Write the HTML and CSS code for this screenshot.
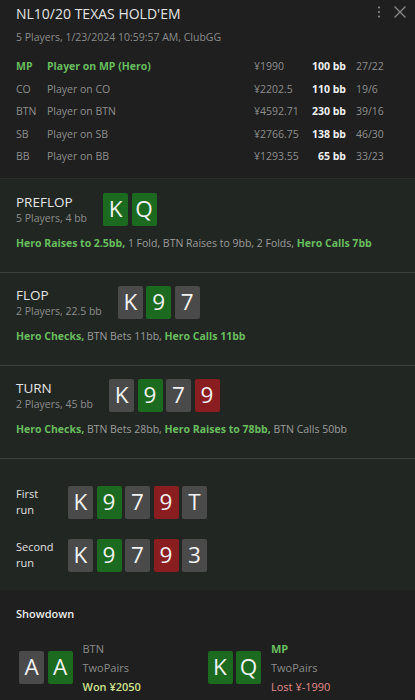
FILE: index.html
```html
<!DOCTYPE html>
<html>
<head>
<meta charset="utf-8">
<link rel="stylesheet" href="styles.css">
</head>
<body>
<div class="app">
  <header class="top">
    <div class="title-row">
      <h1 class="title">NL10/20 TEXAS HOLD'EM</h1>
      <div class="icons">
        <svg class="ico" width="10" height="14" viewBox="0 0 10 14"><circle cx="5" cy="2.5" r="1.1"/><circle cx="5" cy="7" r="1.1"/><circle cx="5" cy="11.5" r="1.1"/></svg>
        <svg class="ico x" width="14" height="14" viewBox="0 0 14 14"><path d="M1.5 1.5 L12.5 12.5 M12.5 1.5 L1.5 12.5"/></svg>
      </div>
    </div>
    <div class="sub">5 Players, 1/23/2024 10:59:57 AM, ClubGG</div>
    <div class="players">
      <div class="prow hero"><span>MP</span><span>Player on MP (Hero)</span><span class="money">¥1990</span><span class="bb">100 bb</span><span class="ratio">27/22</span></div>
      <div class="prow"><span>CO</span><span>Player on CO</span><span class="money">¥2202.5</span><span class="bb">110 bb</span><span class="ratio">19/6</span></div>
      <div class="prow"><span>BTN</span><span>Player on BTN</span><span class="money">¥4592.71</span><span class="bb">230 bb</span><span class="ratio">39/16</span></div>
      <div class="prow"><span>SB</span><span>Player on SB</span><span class="money">¥2766.75</span><span class="bb">138 bb</span><span class="ratio">46/30</span></div>
      <div class="prow"><span>BB</span><span>Player on BB</span><span class="money">¥1293.55</span><span class="bb">65 bb</span><span class="ratio">33/23</span></div>
    </div>
  </header>

  <section class="street first">
    <div class="street-head">
      <div class="sh-text">
        <div class="st-name">PREFLOP</div>
        <div class="st-sub">5 Players, 4 bb</div>
      </div>
      <div class="cards"><span class="card g">K</span><span class="card g">Q</span></div>
    </div>
    <div class="actions"><span class="hl">Hero Raises to 2.5bb,</span> 1 Fold, BTN Raises to 9bb, 2 Folds, <span class="hl">Hero Calls 7bb</span></div>
  </section>

  <section class="street">
    <div class="street-head">
      <div class="sh-text">
        <div class="st-name">FLOP</div>
        <div class="st-sub">2 Players, 22.5 bb</div>
      </div>
      <div class="cards"><span class="card k">K</span><span class="card g">9</span><span class="card k">7</span></div>
    </div>
    <div class="actions"><span class="hl">Hero Checks,</span> BTN Bets 11bb, <span class="hl">Hero Calls 11bb</span></div>
  </section>

  <section class="street">
    <div class="street-head">
      <div class="sh-text">
        <div class="st-name">TURN</div>
        <div class="st-sub">2 Players, 45 bb</div>
      </div>
      <div class="cards"><span class="card k">K</span><span class="card g">9</span><span class="card k">7</span><span class="card r">9</span></div>
    </div>
    <div class="actions"><span class="hl">Hero Checks,</span> BTN Bets 28bb, <span class="hl">Hero Raises to 78bb,</span> BTN Calls 50bb</div>
  </section>

  <section class="runs">
    <div class="run">
      <div class="run-label">First<br>run</div>
      <div class="cards"><span class="card k">K</span><span class="card g">9</span><span class="card k">7</span><span class="card r">9</span><span class="card k">T</span></div>
    </div>
    <div class="run">
      <div class="run-label">Second<br>run</div>
      <div class="cards"><span class="card k">K</span><span class="card g">9</span><span class="card k">7</span><span class="card r">9</span><span class="card k">3</span></div>
    </div>
  </section>

  <section class="showdown">
    <div class="sd-title">Showdown</div>
    <div class="hands">
      <div class="hand">
        <div class="cards"><span class="card k">A</span><span class="card g">A</span></div>
        <div class="hand-info">
          <div class="hp">BTN</div>
          <div class="hr">TwoPairs</div>
          <div class="won">Won ¥2050</div>
        </div>
      </div>
      <div class="hand">
        <div class="cards"><span class="card g">K</span><span class="card g">Q</span></div>
        <div class="hand-info">
          <div class="hp hero-pos">MP</div>
          <div class="hr">TwoPairs</div>
          <div class="lost">Lost ¥-1990</div>
        </div>
      </div>
    </div>
  </section>
</div>
</body>
</html>
```

FILE: styles.css
```css
* { box-sizing: border-box; }
html, body { margin: 0; padding: 0; }
body {
  background: #1e1f1e;
  font-family: "Open Sans", "Noto Sans", sans-serif;
  color: #a0a0a0;
  width: 415px;
  height: 700px;
  overflow: hidden;
}
.app { width: 415px; }

.top {
  background: #1e1f1e;
  padding: 4px 16px 10px;
  border-bottom: 1px solid #2b2f2c;
}
.title-row {
  display: flex;
  justify-content: space-between;
  align-items: center;
  height: 20px;
}
.title {
  margin: 0;
  font-size: 14px;
  font-weight: 400;
  line-height: 20px;
  color: #e4e4e4;
}
.icons {
  display: flex;
  align-items: center;
  gap: 9px;
  margin-right: -8px;
  margin-top: -4px;
}
.ico { fill: #8a8a8a; }
.ico.x { fill: none; stroke: #8a8a8a; stroke-width: 1.3; }
.sub {
  margin-top: 5px;
  font-size: 10.5px;
  line-height: 16px;
  color: #8c8c8c;
}
.players { margin-top: 10px; }
.prow {
  display: grid;
  grid-template-columns: 31px 1fr 50px 42px 53px;
  height: 22.5px;
  align-items: center;
  font-size: 10.5px;
  color: #8e8e8e;
}
.prow .bb { text-align: right; font-weight: 700; color: #f0f0f0; }
.prow .ratio { padding-left: 10px; }
.prow.hero span:nth-child(1), .prow.hero span:nth-child(2) { color: #68bd5e; font-weight: 700; }

.street {
  background: #222623;
  padding: 13px 16px 0;
  height: 93px;
  border-bottom: 1px solid #3a3f3b;
}
.street.first { padding-top: 14px; height: 94px; }
.street-head {
  display: flex;
  align-items: flex-end;
  gap: 16px;
}
.st-name {
  font-size: 13.5px;
  line-height: 18px;
  color: #e4e4e4;
}
.st-sub {
  font-size: 10.5px;
  line-height: 15px;
  color: #8c8c8c;
}
.cards { display: flex; gap: 3.5px; }
.card {
  width: 25px;
  height: 33px;
  border-radius: 2px;
  display: flex;
  align-items: center;
  justify-content: center;
  font-size: 22.5px;
  color: #f2f2f2;
  line-height: 1;
}
.card.g { background: #1b6a1f; }
.card.k { background: #4a4a4a; }
.card.r { background: #8a1d1f; }
.actions {
  margin-top: 9px;
  font-size: 10.5px;
  line-height: 16px;
  color: #9c9c9c;
  white-space: nowrap;
}
.hl { color: #68bd5e; font-weight: 700; }

.runs {
  background: #222623;
  padding: 27px 16px 18px;
  display: flex;
  flex-direction: column;
  gap: 20px;
}
.run { display: flex; align-items: center; }
.run-label {
  width: 52px;
  font-size: 11px;
  line-height: 16px;
  color: #e0e0e0;
}

.showdown {
  background: #1e1f1e;
  padding: 16px 19px 10px;
}
.sd-title {
  font-size: 11px;
  line-height: 16px;
  color: #ececec;
  font-weight: 600;
  margin-left: -3px;
}
.hands {
  display: grid;
  grid-template-columns: 1fr 1fr;
  margin-top: 17px;
}
.hand { display: flex; align-items: center; gap: 10px; }
.hand-info { font-size: 11px; line-height: 19px; color: #8c8c8c; }
.hero-pos { color: #68bd5e; font-weight: 700; }
.won { color: #cfe08e; font-weight: 600; }
.lost { color: #e48a8a; }
```
